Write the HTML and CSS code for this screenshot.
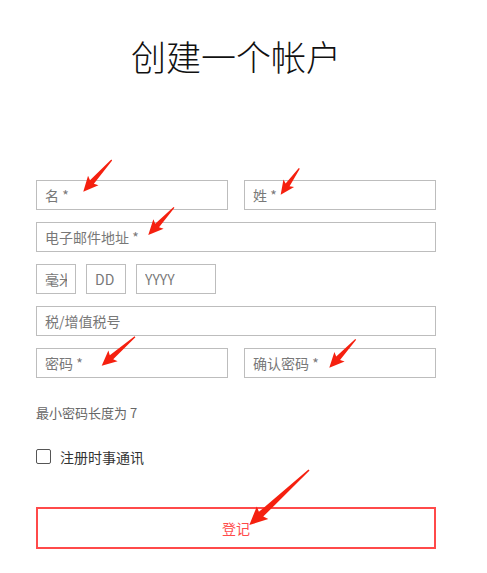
FILE: index.html
```html
<!DOCTYPE html>
<html lang="zh-CN">
<head>
<meta charset="utf-8">
<title>创建一个帐户</title>
<link rel="stylesheet" href="styles.css">
</head>
<body>
<main class="page">
  <h1 class="title">创建一个帐户</h1>
  <form class="form">
    <div class="row two">
      <input class="field" type="text" placeholder="名 *">
      <input class="field" type="text" placeholder="姓 *">
    </div>
    <input class="field" type="email" placeholder="电子邮件地址 *">
    <div class="row date">
      <input class="field mm" type="text" placeholder="毫米">
      <input class="field dd" type="text" placeholder="DD">
      <input class="field yyyy" type="text" placeholder="YYYY">
    </div>
    <input class="field" type="text" placeholder="税/增值税号">
    <div class="row two">
      <input class="field" type="password" placeholder="密码 *">
      <input class="field" type="password" placeholder="确认密码 *">
    </div>
    <p class="hint">最小密码长度为 7</p>
    <label class="check"><span class="box"></span><span>注册时事通讯</span></label>
    <button class="submit" type="button">登记</button>
  </form>
</main>
<svg class="arrows" width="487" height="573" viewBox="0 0 487 573" aria-hidden="true">
  <g fill="#f5200f">
    <polygon transform="translate(111.7 160) rotate(131.9)" points="0,-0.6 29.6,-2.6 27.6,-7 42.6,0 27.6,7 29.6,2.6 0,0.6"/>
    <polygon transform="translate(299.3 168.3) rotate(125.2)" points="0,-0.6 20.3,-2.4 18.3,-6.5 32.3,0 18.3,6.5 20.3,2.4 0,0.6"/>
    <polygon transform="translate(174 207.3) rotate(132.9)" points="0,-0.6 24.8,-2.6 22.8,-7 37.8,0 22.8,7 24.8,2.6 0,0.6"/>
    <polygon transform="translate(135 336.7) rotate(138.9)" points="0,-0.6 31.2,-2.6 29.2,-7 44.2,0 29.2,7 31.2,2.6 0,0.6"/>
    <polygon transform="translate(355.7 339.3) rotate(132.9)" points="0,-0.6 25.8,-2.6 23.8,-7 38.8,0 23.8,7 25.8,2.6 0,0.6"/>
    <polygon transform="translate(309 470) rotate(137.3)" points="0,-0.8 65.2,-3.2 63.2,-8.5 81.2,0 63.2,8.5 65.2,3.2 0,0.8"/>
  </g>
</svg>
</body>
</html>
```

FILE: styles.css
```css
html, body {
  margin: 0;
  padding: 0;
  background: #ffffff;
}

body {
  position: relative;
  width: 487px;
  height: 573px;
  overflow: hidden;
  font-family: "Noto Sans CJK SC", "Noto Sans", sans-serif;
}

.page {
  width: 400px;
  margin-left: 36px;
  padding-top: 36px;
}

.title {
  margin: 0;
  height: 40px;
  line-height: 40px;
  font-size: 35px;
  font-weight: 200;
  text-align: center;
  color: #111;
  letter-spacing: 0;
}

.form {
  margin-top: 104px;
  display: flex;
  flex-direction: column;
  gap: 12px;
}

.row {
  display: flex;
}

.row.two {
  gap: 16px;
}

.row.two .field {
  flex: 1 1 0;
  min-width: 0;
}

.row.date {
  gap: 10px;
}

.field {
  box-sizing: border-box;
  height: 30px;
  width: 100%;
  margin: 0;
  padding: 0 8px;
  border: 1px solid #bdbdbd;
  border-radius: 0;
  background: #fff;
  font-family: "Noto Sans CJK SC", "Noto Sans", sans-serif;
  font-size: 14px;
  color: #333;
  outline: none;
}

.field::placeholder {
  color: #787878;
  opacity: 1;
}

.field.mm,
.field.dd {
  width: 40px;
}

.field.yyyy {
  width: 80px;
}

.hint {
  margin: 13px 0 0 0;
  height: 20px;
  line-height: 20px;
  font-size: 13px;
  color: #666;
}

.check {
  margin-top: 12px;
  height: 20px;
  display: flex;
  align-items: center;
  gap: 9px;
  font-size: 14px;
  color: #333;
}

.box {
  box-sizing: border-box;
  width: 15px;
  height: 15px;
  border: 1.5px solid #555;
  border-radius: 2px;
  background: #fff;
  margin-top: -2px;
}

.submit {
  margin-top: 28px;
  box-sizing: border-box;
  height: 42px;
  width: 100%;
  border: 2px solid #ff4a4a;
  background: #fff;
  color: #ff4a4a;
  font-family: "Noto Sans CJK SC", "Noto Sans", sans-serif;
  font-size: 14px;
  padding: 0;
}

.arrows {
  position: absolute;
  top: 0;
  left: 0;
  pointer-events: none;
}
```
